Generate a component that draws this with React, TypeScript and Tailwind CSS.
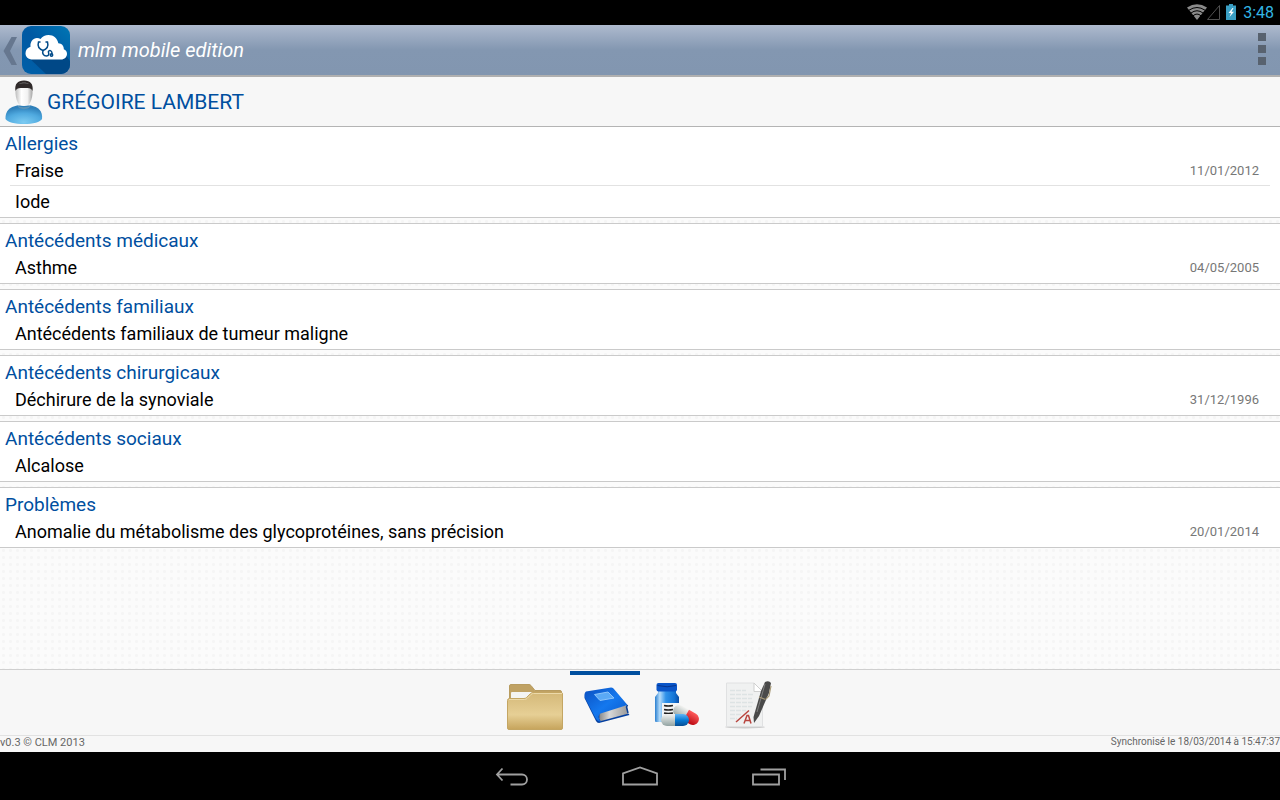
import { useState } from 'react'

type Entry = { label: string; date?: string }
type Section = { title: string; entries: Entry[] }

const SECTIONS: Section[] = [
  {
    title: 'Allergies',
    entries: [{ label: 'Fraise', date: '11/01/2012' }, { label: 'Iode' }],
  },
  { title: 'Antécédents médicaux', entries: [{ label: 'Asthme', date: '04/05/2005' }] },
  { title: 'Antécédents familiaux', entries: [{ label: 'Antécédents familiaux de tumeur maligne' }] },
  { title: 'Antécédents chirurgicaux', entries: [{ label: 'Déchirure de la synoviale', date: '31/12/1996' }] },
  { title: 'Antécédents sociaux', entries: [{ label: 'Alcalose' }] },
  {
    title: 'Problèmes',
    entries: [{ label: 'Anomalie du métabolisme des glycoprotéines, sans précision', date: '20/01/2014' }],
  },
]

function StatusBar() {
  return (
    <div className="flex h-[25px] items-center justify-end bg-black pr-1.5">
      <svg width="56" height="25" viewBox="0 0 56 25" aria-hidden="true">
        {/* wifi */}
        <path d="M0 7.500Q10 1 20 7.500L10 20Z" fill="#8a8a8a" />
        <g fill="none" stroke="#000" strokeWidth="1">
          <path d="M2 10.200Q10 4.800 18 10.200" />
          <path d="M4 13Q10 8.500 16 13" />
          <path d="M6 15.800Q10 12.300 14 15.800" />
        </g>
        {/* signal */}
        <path d="M20.500 19.500H32.500V5.500Z" fill="none" stroke="#505050" />
        {/* battery */}
        <path d="M42 4h4v1.500h3V20H39V5.500h3Z" fill="#3a9fc4" />
        <path d="M45.500 8L41.500 13h2.500l-1.500 4 4.500-5.300h-2.500L46.500 8Z" fill="#fff" />
      </svg>
      <span className="text-base leading-6 text-[#33b5e5]">3:48</span>
    </div>
  )
}

function AppLogo() {
  return (
    <svg width="48" height="48" viewBox="0 0 48 48" aria-hidden="true">
      <defs>
        <linearGradient id="logoBg" x1="0" y1="1" x2="1" y2="0">
          <stop offset="0" stopColor="#0060a8" />
          <stop offset="0.5" stopColor="#0059a3" />
          <stop offset="1" stopColor="#0076b4" />
        </linearGradient>
        <clipPath id="logoClip">
          <rect width="48" height="48" rx="9" />
        </clipPath>
      </defs>
      <g clipPath="url(#logoClip)">
        <rect width="48" height="48" fill="url(#logoBg)" />
        <path d="M6 31L24 48H48V35L43 28Z" fill="#00437f" opacity="0.8" />
      </g>
      <path
        d="M11 33.500C6 33.500 3.500 30.500 3.500 27.200 3.500 24 5.500 21.500 8.500 20.700 8 15.500 11 12 15 12c1.300 0 2.500.4 3.500 1C20.500 10.300 23.300 9 26.500 9c5 0 9 3.500 9.800 8.200 3.400.1 5.700 2.800 5.500 6 2 .8 3.200 2.500 3.200 4.500 0 3.300-2.500 5.800-6 5.800Z"
        fill="#fff"
      />
      <g fill="none" stroke="#004a88" strokeWidth="1.500" strokeLinecap="round">
        <path d="M18 16h-1.500c-1 3.500.5 7 4.500 8.500 4-1.500 5.500-5 4.500-8.500H24" />
        <path d="M21 24.500c-1 3 .5 5.500 3.500 5.500 2.500 0 2.500-2 2-3.500s1-2.500 2.500-1.500 1 2 .8 3" />
        <circle cx="29.500" cy="29" r="1.200" />
      </g>
    </svg>
  )
}

function ActionBar() {
  return (
    <header className="flex h-[52px] items-center border-b-2 border-[#b0b0b0] bg-linear-to-b from-[#aebace] via-[#8397b1] via-50% to-[#8296b0]">
      <button type="button" aria-label="Retour" className="flex items-center">
        <svg width="22" height="48" viewBox="0 0 22 48" aria-hidden="true">
          <path d="M11.500 11h5.500L10 25l7 14h-5.500L3.500 25Z" fill="#66778f" />
        </svg>
        <AppLogo />
      </button>
      <h1 className="ml-2 text-xl italic text-white">mlm mobile edition</h1>
      <button type="button" aria-label="Menu" className="ml-auto flex flex-col gap-1 px-3.5 pt-2 pb-2.5">
        <span className="size-2 bg-[#58626f]" />
        <span className="size-2 bg-[#58626f]" />
        <span className="size-2 bg-[#58626f]" />
      </button>
    </header>
  )
}

function Avatar() {
  return (
    <svg width="38" height="46" viewBox="0 0 38 46" aria-hidden="true">
      <defs>
        <radialGradient id="shirt" cx="0.5" cy="0.9" r="0.8">
          <stop offset="0" stopColor="#7ccbf2" />
          <stop offset="0.6" stopColor="#4fa9df" />
          <stop offset="1" stopColor="#2f80ba" />
        </radialGradient>
        <linearGradient id="face" x1="0" x2="1">
          <stop offset="0" stopColor="#bdbdbd" />
          <stop offset="0.35" stopColor="#fff" />
          <stop offset="0.7" stopColor="#f2f2f2" />
          <stop offset="1" stopColor="#a5a5a5" />
        </linearGradient>
      </defs>
      <path d="M.5 40C0 32 5 28 12 26.500h14C33 28 38 32 37 40c-1.500 3-9 5-18 5S2 43 .5 40Z" fill="url(#shirt)" />
      <path d="M12 26c3 3 11 3 14 0l-2 3c-3 1.500-7 1.500-10 0Z" fill="#5b93b8" />
      <path d="M10.500 10c0-5 3-8 8.500-8s8.500 3 8.500 8c.3 6-.5 10-2.500 14-2 4-10 4-12 0-2-4-2.800-8-2.500-14Z" fill="url(#face)" />
      <path d="M10.500 12C9.500 5 12.500 1.500 19 1.500S28.500 5 27.500 12C26.500 9.500 25 9 19 9s-7.500.5-8.500 3Z" fill="#302a2a" />
      <path d="M14 5c2-2 8-2 10 0-3-1-7-1-10 0Z" fill="#777" />
    </svg>
  )
}

function HistorySection({ section }: { section: Section }) {
  return (
    <section className="border-y border-[#cacaca] bg-white pt-1.5 first:border-t-0">
      <h3 className="px-[5px] text-[19px] leading-[22px] text-[#004f9f]">{section.title}</h3>
      <ul className="px-2.5">
        {section.entries.map((entry) => (
          <li
            key={entry.label}
            className="flex h-[31px] items-center justify-between border-b border-[#e2e2e2] pt-0.5 pr-[11px] pl-[5px] last:border-transparent"
          >
            <span className="text-lg leading-6 text-black">{entry.label}</span>
            {entry.date && <time className="text-[13px] leading-6 text-[#777]">{entry.date}</time>}
          </li>
        ))}
      </ul>
    </section>
  )
}

function FolderIcon() {
  return (
    <svg width="58" height="54" viewBox="0 -4 58 54" aria-hidden="true">
      <defs>
        <linearGradient id="folder" x1="0" y1="0" x2="0" y2="1">
          <stop offset="0" stopColor="#d4b878" />
          <stop offset="0.6" stopColor="#e6cf95" />
          <stop offset="1" stopColor="#c6a45c" />
        </linearGradient>
      </defs>
      <path d="M3.500 20V4q0-1.500 1.500-1.500H23q1 0 2 1L29 8.500H54q1.500 0 1.500 1.500v10Z" fill="#c0a264" stroke="#b89c60" />
      <path d="M5 22V11q0-1 1-1h47.500l1.500 3v9Z" fill="#f4f4f2" />
      <path d="M1.500 46V18.500q0-2 2-2H18q1.500 0 2.500-1l4-4q1-1 2.500-1h28q1.500 0 1.500 1.500V46q0 1.500-1.500 1.500H3q-1.500 0-1.500-1.500Z" fill="url(#folder)" stroke="#c4a663" />
      <path d="M3 17.500H18.500q1.500 0 2.500-1l4-4q1-1 2.500-1H56" fill="none" stroke="#ecd9a9" />
    </svg>
  )
}

function BookIcon() {
  return (
    <svg width="50" height="40" viewBox="-4 -2 50 40" aria-hidden="true">
      <defs>
        <linearGradient id="cover" x1="0" y1="0" x2="1" y2="1">
          <stop offset="0" stopColor="#0a4fc0" />
          <stop offset="0.5" stopColor="#1478ee" />
          <stop offset="1" stopColor="#0754c8" />
        </linearGradient>
        <linearGradient id="pages" x1="0" x2="1">
          <stop offset="0" stopColor="#777" />
          <stop offset="0.4" stopColor="#d8d8d8" />
          <stop offset="1" stopColor="#999" />
        </linearGradient>
      </defs>
      <path d="M13 26L43 18l1 9L17 35Z" fill="url(#pages)" />
      <path d="M2 5L.5 11 12 34q1 2 3 2L45.500 28l-1-1.500L17 34q-2-1-1.500-7Z" fill="#053f9f" />
      <path d="M2 4.500L27 .5q1.500 0 2.500 1L43.500 18l-27 8.500q-2 1-2 3.500Q15 33 17 35q-3 0-5-3L.500 10Q0 6 2 4.500Z" fill="url(#cover)" />
      <path d="M10.500 7.500L24 5l6 6-14 2.500Z" fill="#5aa9f5" stroke="#8cc4fb" />
      <path d="M43.500 18l-1 2L44 26" fill="none" stroke="#0a3f96" strokeWidth="1.500" />
    </svg>
  )
}

function PillsIcon() {
  return (
    <svg width="50" height="46" viewBox="-4 0 50 46" aria-hidden="true">
      <defs>
        <linearGradient id="bottle" x1="0" x2="1">
          <stop offset="0" stopColor="#2a7fd0" />
          <stop offset="0.2" stopColor="#b5dcfa" />
          <stop offset="0.45" stopColor="#2f92ea" />
          <stop offset="0.8" stopColor="#1475d6" />
          <stop offset="1" stopColor="#0b4da4" />
        </linearGradient>
        <linearGradient id="pill" x1="0" y1="0" x2="0" y2="1">
          <stop offset="0" stopColor="#f4f4f2" />
          <stop offset="1" stopColor="#92a3a2" />
        </linearGradient>
        <linearGradient id="pillBlue" x1="0" y1="0" x2="0" y2="1">
          <stop offset="0" stopColor="#62b5f5" />
          <stop offset="0.5" stopColor="#087bd6" />
          <stop offset="1" stopColor="#064d93" />
        </linearGradient>
        <linearGradient id="pillRed" x1="0" y1="0" x2="0" y2="1">
          <stop offset="0" stopColor="#ff5b5b" />
          <stop offset="1" stopColor="#b90710" />
        </linearGradient>
      </defs>
      <path d="M4 8H22v3l3 4v25H2q-1 0-1-1.500V15l3-4Z" fill="url(#bottle)" />
      <rect x="2.500" y="1" width="20.500" height="8.500" rx="2" fill="#0a55c8" />
      <path d="M3.500 3.500q10 2.500 18.500 0" fill="none" stroke="#07348c" />
      <path d="M8 21h17v15H8Z" fill="#f3f5f6" />
      <path d="M10 23.500q4 1 9 0M10 27.500q4 1 9 0M10 31q4 1 9 0" fill="none" stroke="#222" strokeWidth="1.500" />
      <g transform="rotate(30 32 33)">
        <path d="M32 27H24a6 6 0 0 0 0 12h8Z" fill="url(#pill)" />
        <path d="M32 27h8a6 6 0 0 1 0 12h-8Z" fill="url(#pillRed)" />
      </g>
      <path d="M21 32H13a6 6 0 0 0 0 12h8Z" fill="url(#pill)" />
      <path d="M21 32h8a6 6 0 0 1 0 12h-8Z" fill="url(#pillBlue)" />
    </svg>
  )
}

function NotesIcon() {
  return (
    <svg width="56" height="50" viewBox="-7 0 56 50" aria-hidden="true">
      <ellipse cx="21" cy="47" rx="20" ry="1.500" fill="#ccc" />
      <path d="M2.500 3H30l8.500 8.500V46.500h-36Z" fill="#f0f1f1" stroke="#e0e1e2" />
      <path d="M30 3v8.500h8.500Z" fill="#fff" stroke="#cfcfcf" />
      <path
        d="M6 10.500h16M6 14.500h24M6 18.500h22M6 22.500h24M6 26.500h22M6 30.500h16M6 34.500h12M6 38.500h7"
        stroke="#dde3e4"
        strokeWidth="1.500"
        strokeDasharray="5 1"
      />
      <path d="M12 42L25 30.500M20 43.500l3-8h1.500l2.500 8M21 40.500h5" fill="none" stroke="#b9453f" strokeWidth="1.500" />
      <path d="M41 2q4-2 6 1L45 13 35 36l-5 7-.5-6L37 11Z" fill="#4a4a4a" />
      <path d="M41 4L33 32" stroke="#808080" />
      <path d="M35 17l6.500 2.500M47 6l-2 10-3 3" fill="none" stroke="#a89a78" strokeWidth="1.200" />
    </svg>
  )
}

const TABS = [
  { name: 'Dossier', icon: <FolderIcon /> },
  { name: 'Antécédents', icon: <BookIcon /> },
  { name: 'Traitements', icon: <PillsIcon /> },
  { name: 'Notes', icon: <NotesIcon /> },
]

function SystemBar() {
  return (
    <div className="flex h-12 items-center justify-center gap-[88px] bg-black">
      <button type="button" aria-label="Précédent">
        <svg width="40" height="24" viewBox="0 0 40 24" fill="none" stroke="#a0a0a0" strokeWidth="1.800">
          <path d="M10.500 4.500L5 10.500l5.500 6M5 10.500H30a5 5 0 0 1 0 10H18.500" />
        </svg>
      </button>
      <button type="button" aria-label="Accueil">
        <svg width="40" height="24" viewBox="0 0 40 24" fill="none" stroke="#a0a0a0" strokeWidth="1.800">
          <path d="M3 20.500V9.500L20 3.500l17 6v11Z" />
        </svg>
      </button>
      <button type="button" aria-label="Applications récentes">
        <svg width="40" height="24" viewBox="0 0 40 24" fill="none" stroke="#a0a0a0" strokeWidth="1.800">
          <path d="M5 10.500H31v10H5ZM12.500 5.500H37V16" />
        </svg>
      </button>
    </div>
  )
}

export default function App() {
  const [active, setActive] = useState(1)

  return (
    <div className="flex min-h-screen flex-col bg-[#f7f7f7] font-[Roboto,sans-serif]">
      <StatusBar />
      <ActionBar />

      <div className="flex h-[50px] items-center gap-1 border-b border-[#b4b4b4] pl-[5px]">
        <Avatar />
        <h2 className="text-[21px] leading-6 text-[#004f9f]">GRÉGOIRE LAMBERT</h2>
      </div>

      <main className="flex flex-1 flex-col gap-[5px] bg-[#fbfbfb] bg-[radial-gradient(circle,#f5f5f5_1px,transparent_2px)] bg-size-[7px_7px]">
        {SECTIONS.map((section) => (
          <HistorySection key={section.title} section={section} />
        ))}
      </main>

      <nav className="flex h-[67px] justify-center border-y border-t-[#cfcfcf] border-b-[#e2e2e2] pt-px">
        {TABS.map((tab, i) => (
          <button
            key={tab.name}
            type="button"
            aria-label={tab.name}
            aria-pressed={i === active}
            onClick={() => setActive(i)}
            className={`flex w-[70px] items-center justify-center border-t-4 ${
              i === active ? 'border-[#004f9f]' : 'border-transparent'
            }`}
          >
            {tab.icon}
          </button>
        ))}
      </nav>

      <footer className="flex h-4 justify-between text-[11px] text-[#666]">
        <span className="leading-[14px]">v0.3 © CLM 2013</span>
        <span className="text-[10px] leading-3">Synchronisé le 18/03/2014 à 15:47:37</span>
      </footer>

      <SystemBar />
    </div>
  )
}
